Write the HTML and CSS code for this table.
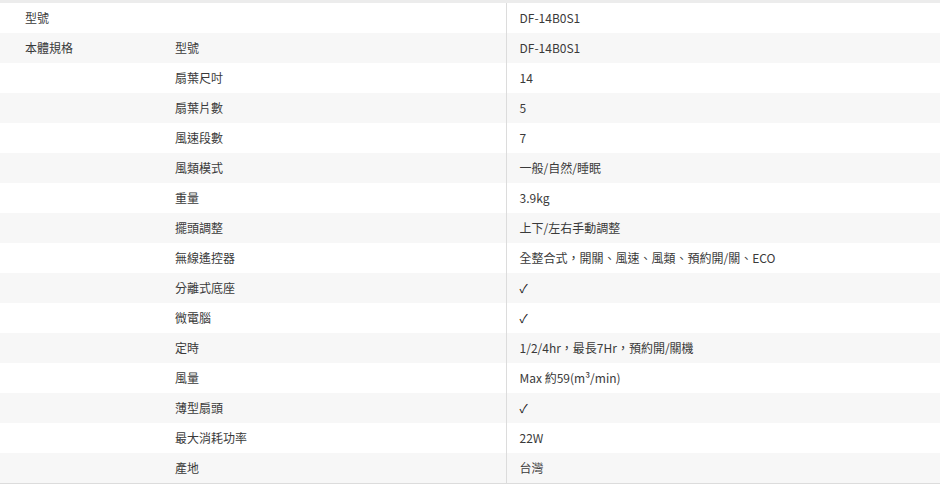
FILE: index.html
```html
<!DOCTYPE html>
<html lang="zh-Hant">
<head>
<meta charset="utf-8">
<link rel="stylesheet" href="styles.css">
</head>
<body>
<table class="spec">
  <colgroup><col class="c1"><col class="c2"><col class="c3"></colgroup>
  <tbody>
    <tr><td class="k" colspan="2">型號</td><td class="v">DF-14B0S1</td></tr>
    <tr><td class="k">本體規格</td><td class="k2">型號</td><td class="v">DF-14B0S1</td></tr>
    <tr><td></td><td class="k2">扇葉尺吋</td><td class="v">14</td></tr>
    <tr><td></td><td class="k2">扇葉片數</td><td class="v">5</td></tr>
    <tr><td></td><td class="k2">風速段數</td><td class="v">7</td></tr>
    <tr><td></td><td class="k2">風類模式</td><td class="v">一般/自然/睡眠</td></tr>
    <tr><td></td><td class="k2">重量</td><td class="v">3.9kg</td></tr>
    <tr><td></td><td class="k2">擺頭調整</td><td class="v">上下/左右手動調整</td></tr>
    <tr><td></td><td class="k2">無線遙控器</td><td class="v">全整合式，開關、風速、風類、預約開/關、ECO</td></tr>
    <tr><td></td><td class="k2">分離式底座</td><td class="v check">✓</td></tr>
    <tr><td></td><td class="k2">微電腦</td><td class="v check">✓</td></tr>
    <tr><td></td><td class="k2">定時</td><td class="v">1/2/4hr，最長7Hr，預約開/關機</td></tr>
    <tr><td></td><td class="k2">風量</td><td class="v">Max 約59(m³/min)</td></tr>
    <tr><td></td><td class="k2">薄型扇頭</td><td class="v check">✓</td></tr>
    <tr><td></td><td class="k2">最大消耗功率</td><td class="v">22W</td></tr>
    <tr><td></td><td class="k2">產地</td><td class="v">台灣</td></tr>
  </tbody>
</table>
</body>
</html>
```
FILE: styles.css
```css
html, body {
  margin: 0;
  padding: 0;
  background: #fff;
}
.spec {
  width: 940px;
  border-collapse: collapse;
  table-layout: fixed;
  border-top: 3px solid #ececec;
  border-bottom: 1px solid #dcdcdc;
  font-family: "Noto Sans CJK TC", "Noto Sans", sans-serif;
  font-size: 12px;
  color: #3a3a3a;
}
.c1 { width: 150px; }
.c2 { width: 356px; }
.spec tr { height: 30px; }
.spec tr:nth-child(even) { background: #f7f7f7; }
.spec td {
  padding: 0;
  height: 30px;
  line-height: 30px;
  vertical-align: middle;
  white-space: nowrap;
}
.spec td.k { padding-left: 25px; }
.spec td.k2 { padding-left: 25px; }
.spec td.v {
  padding-left: 13px;
  border-left: 1px solid #dcdcdc;
}
.spec td.check {
  color: #222;
}
```
